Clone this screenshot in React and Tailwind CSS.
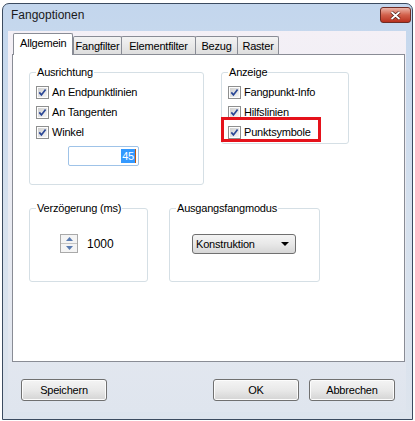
// App.jsx - Fangoptionen dialog (Vista style)
import React from "react";

const Check = () => (
    <svg width="13" height="13" viewBox="0 0 13 13" className="shrink-0">
        <defs>
            <linearGradient id="cbFill" x1="0" y1="0" x2="1" y2="1">
                <stop offset="0" stopColor="#cfcfcf" />
                <stop offset="1" stopColor="#f6f6f6" />
            </linearGradient>
        </defs>
        <rect x="0.5" y="0.5" width="12" height="12" fill="#fdfdfd" stroke="#8e8f8f" />
        <rect x="2" y="2" width="9" height="9" fill="url(#cbFill)" />
        <path d="M3.3 6.4 L5.4 8.9 L9.6 3.4" stroke="#2b4796" strokeWidth="1.7" fill="none" />
    </svg>
);

const CheckRow = ({ label }) => (
    <div className="flex items-center gap-[3px] h-[13px]">
        <Check />
        <span className="leading-[13px]">{label}</span>
    </div>
);

const Group = ({ label, className = "", children }) => (
    <div className={`relative border border-[#d5dfe5] rounded-[3px] ${className}`}>
        <span className="absolute -top-[8px] left-[6px] bg-white px-[1px] leading-[14px]">{label}</span>
        {children}
    </div>
);

const Button = ({ children, className = "" }) => (
    <div
        className={`w-[86px] h-[22px] flex items-center justify-center border border-[#707070] rounded-[3px] bg-gradient-to-b from-[#f4f4f4] via-[#e9e9e9] to-[#d4d4d4] shadow-[inset_0_0_0_1px_#fcfcfc] ${className}`}
    >
        {children}
    </div>
);

const tabs = [
    { label: "Fangfilter", w: "w-[49px]" },
    { label: "Elementfilter", w: "w-[75px]" },
    { label: "Bezug", w: "w-[43px]" },
    { label: "Raster", w: "w-[42px]" },
];

export default function App() {
    return (
        <div className="w-[415px] h-[421px] bg-white font-['Liberation_Sans',Arial,sans-serif] text-[11px] tracking-[-0.2px] text-black overflow-hidden">
            <div className="ml-[2px] mt-[3px] w-[411px] h-[417px] border border-[#3b4b60] rounded-t-[7px] flex flex-col bg-gradient-to-b from-[#c3d6ed] via-[#d6e1ee] to-[#dde4ed]">
                {/* Title bar */}
                <div className="h-[27px] flex justify-between pl-[8px] pr-[1px] shrink-0">
                    <span className="pt-[4px] text-[12px] leading-[15px] tracking-normal text-[#1a1a1a]">Fangoptionen</span>
                    <div className="mt-[3px] w-[31px] h-[16px] rounded-[3px] border border-[#6e2c24] bg-gradient-to-b from-[#eab4a8] via-[#d2604b] to-[#b8301d] flex items-center justify-center">
                        <svg width="11" height="9" viewBox="0 0 11 9">
                            <path d="M1.5 1 L9.5 8 M9.5 1 L1.5 8" stroke="#4a1a14" strokeWidth="3.2" />
                            <path d="M1.5 1 L9.5 8 M9.5 1 L1.5 8" stroke="#ffffff" strokeWidth="1.8" />
                        </svg>
                    </div>
                </div>

                {/* Client area */}
                <div className="flex-1 ml-[5px] mr-[6px] mb-[7px] pl-[4px] pt-[2px] bg-gradient-to-b from-[#f4f0f6] via-[#e9ebf2] to-[#dfe5ee]">
                    {/* Tabs */}
                    <div className="flex items-end h-[21px] relative z-10">
                        <div className="w-[60px] h-[22px] -mb-[1px] ml-[1px] bg-white border border-b-0 border-[#898c95] rounded-t-[2px] flex items-center pl-[6px] pb-[2px]">
                            Allgemein
                        </div>
                        {tabs.map((t, i) => (
                            <div
                                key={t.label}
                                className={`${t.w} h-[18px] ${i > 0 ? "-ml-[1px]" : ""} border border-b-0 border-[#898c95] rounded-t-[2px] bg-gradient-to-b from-[#f3f3f3] to-[#dedede] flex items-center justify-center pt-[1px] whitespace-nowrap`}
                            >
                                {t.label}
                            </div>
                        ))}
                    </div>

                    {/* Panel */}
                    <div className="w-[393px] h-[308px] bg-white border border-[#898c95] pt-[17px] pl-[16px]">
                        <div className="flex items-start gap-[17px]">
                            <Group label="Ausrichtung" className="w-[175px] h-[113px] pt-[13px] pl-[6px]">
                                <div className="flex flex-col gap-[7px]">
                                    <CheckRow label="An Endpunktlinien" />
                                    <CheckRow label="An Tangenten" />
                                    <CheckRow label="Winkel" />
                                </div>
                                <div className="ml-[32px] mt-[7px] w-[71px] h-[20px] border border-[#9fc3e8] rounded-[2px] flex items-center justify-end pr-[2px]">
                                    <span className="bg-[#3399ff] text-white leading-[14px] px-[1px]">45</span>
                                    <span className="w-[1px] h-[14px] bg-[#c0570f]" />
                                </div>
                            </Group>

                            <Group label="Anzeige" className="w-[128px] h-[72px] pt-[13px] pl-[6px]">
                                <div className="flex flex-col gap-[7px]">
                                    <CheckRow label="Fangpunkt-Info" />
                                    <CheckRow label="Hilfslinien" />
                                    <CheckRow label="Punktsymbole" />
                                </div>
                                <div className="absolute left-[-1px] top-[44px] w-[100px] h-[25px] border-[3px] border-[#e5121b]" />
                            </Group>
                        </div>

                        <div className="flex items-start gap-[21px] mt-[23px]">
                            <Group label="Verzögerung (ms)" className="w-[119px] h-[74px] pt-[25px] pl-[30px]">
                                <div className="flex items-center gap-[9px]">
                                    <div className="w-[18px] h-[19px] border border-[#a9a9a9] flex flex-col bg-[#f4f4f4]">
                                        <div className="flex-1 flex items-center justify-center border-b border-[#c4c4c4]">
                                            <svg width="7" height="4" viewBox="0 0 7 4">
                                                <path d="M0 4 L3.5 0 L7 4 Z" fill="#5a7bb0" />
                                            </svg>
                                        </div>
                                        <div className="flex-1 flex items-center justify-center">
                                            <svg width="7" height="4" viewBox="0 0 7 4">
                                                <path d="M0 0 L3.5 4 L7 0 Z" fill="#5a7bb0" />
                                            </svg>
                                        </div>
                                    </div>
                                    <span className="text-[12px] leading-[14px] tracking-normal">1000</span>
                                </div>
                            </Group>

                            <Group label="Ausgangsfangmodus" className="w-[151px] h-[74px] pt-[25px] pl-[22px]">
                                <div className="w-[104px] h-[20px] border border-[#707070] rounded-[3px] bg-gradient-to-b from-[#f4f4f4] via-[#e8e8e8] to-[#d6d6d6] flex items-center justify-between pl-[3px] pr-[6px]">
                                    <span>Konstruktion</span>
                                    <svg width="8" height="4" viewBox="0 0 8 4">
                                        <path d="M0 0 L8 0 L4 4 Z" fill="#000" />
                                    </svg>
                                </div>
                            </Group>
                        </div>
                    </div>

                    {/* Buttons */}
                    <div className="flex mt-[17px] pl-[9px]">
                        <Button>Speichern</Button>
                        <Button className="ml-[106px]">OK</Button>
                        <Button className="ml-[10px]">Abbrechen</Button>
                    </div>
                </div>
            </div>
        </div>
    );
}
